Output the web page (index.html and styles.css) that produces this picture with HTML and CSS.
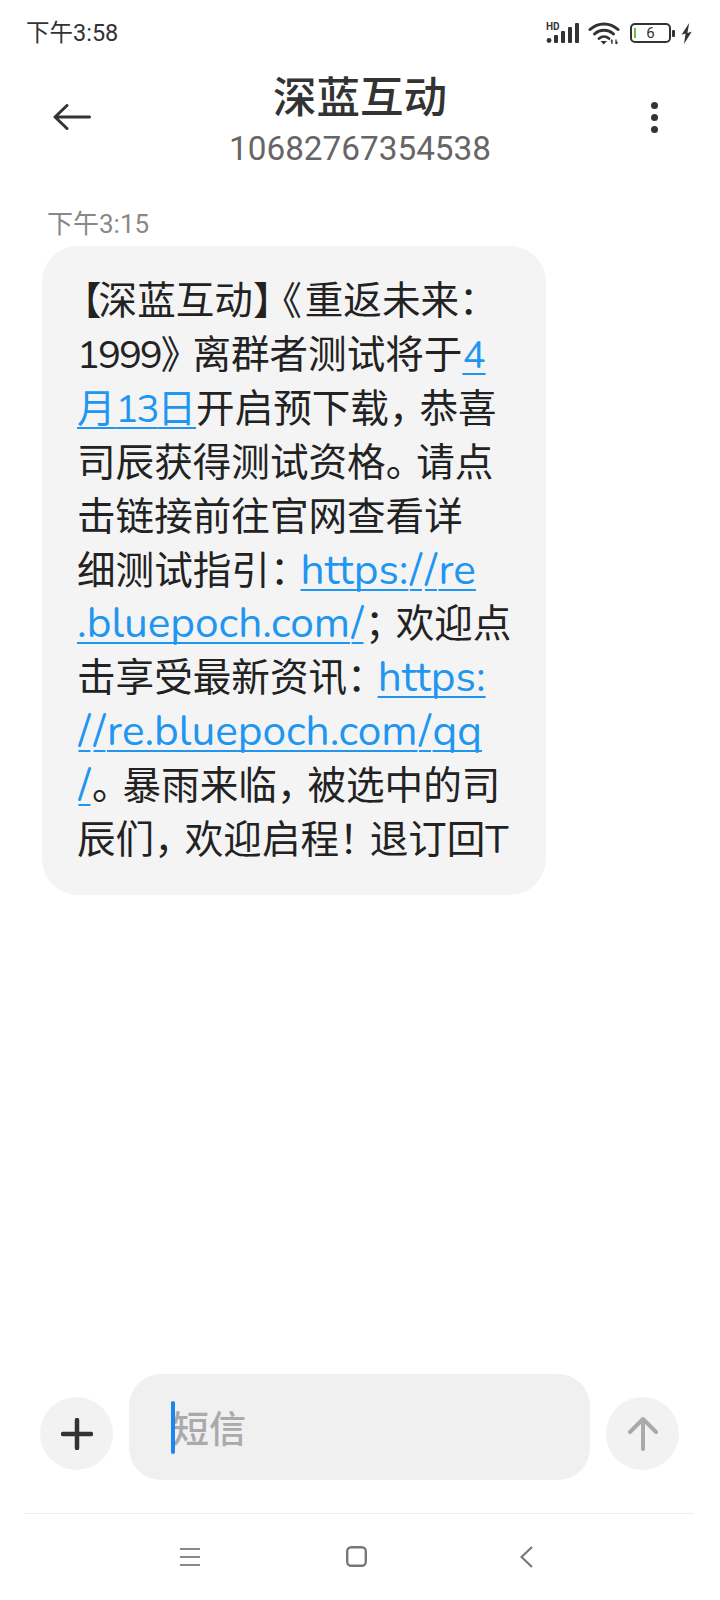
FILE: index.html
```html
<!DOCTYPE html>
<html lang="zh-CN">
<head>
<meta charset="utf-8">
<title>深蓝互动</title>
<link rel="stylesheet" href="styles.css">
</head>
<body>
<div class="phone">
  <div class="status">
    <span class="clock">下午3:58</span>
    <div class="status-icons">
      <svg class="ic-signal" width="34" height="22" viewBox="0 0 34 22">
        <text x="0" y="8" class="hd">HD</text>
        <circle cx="3" cy="18.500" r="2.400" fill="#333"/>
        <rect x="8" y="13" width="4" height="8" rx="1" fill="#333"/>
        <rect x="15" y="9" width="4" height="12" rx="1" fill="#333"/>
        <rect x="22" y="5" width="4" height="16" rx="1" fill="#333"/>
        <rect x="29" y="1" width="4" height="20" rx="1" fill="#333"/>
      </svg>
      <svg class="ic-wifi" width="32" height="24" viewBox="0 0 32 24">
        <path d="M2 8.500C10 1 22 1 30 8.500" fill="none" stroke="#333" stroke-width="3" stroke-linecap="round"/>
        <path d="M6.500 13C12 8 20 8 25.500 13" fill="none" stroke="#333" stroke-width="3" stroke-linecap="round"/>
        <path d="M11 17.500C14 15 18 15 21 17.500" fill="none" stroke="#333" stroke-width="2.800" stroke-linecap="round"/>
        <path d="M12.500 20H19L15.700 23.500Z" fill="#333"/>
        <path d="M24 23V19M23 20.500L24 18.500M28 18.500V23M28 23L29.500 21" fill="none" stroke="#333" stroke-width="1.300"/>
      </svg>
      <div class="battery">
        <div class="batt-body"><span class="batt-level"></span><span class="batt-num">6</span></div>
        <span class="batt-tip"></span>
      </div>
      <svg class="ic-bolt" width="11" height="21" viewBox="0 0 11 21">
        <path d="M8.200 0L0.500 11.800L4.600 10.600L3 21L10.700 8.800L6.400 10Z" fill="#333"/>
      </svg>
    </div>
  </div>

  <header class="topbar">
    <svg class="ic-back" width="38" height="26" viewBox="0 0 38 26">
      <path d="M2 13H36.500M14 1.500L2 13L14 24.500" fill="none" stroke="#333" stroke-width="3" stroke-linecap="round" stroke-linejoin="round"/>
    </svg>
    <div class="contact">
      <div class="contact-name">深蓝互动</div>
      <div class="contact-num">10682767354538</div>
    </div>
    <div class="kebab"><i></i><i></i><i></i></div>
  </header>

  <main class="thread">
    <div class="stamp">下午3:15</div>
    <div class="bubble"><span class="bl">【</span>深蓝互动<span class="br">】</span><span class="bo">《</span>重返未来：<br><span class="dg">1999</span><span class="br2">》</span>离群者测试将于<a href="#">4<br>月<span class="dg">13</span>日</a>开启预下载<span class="p">，</span>恭喜<br>司辰获得测试资格<span class="p">。</span>请点<br>击链接前往官网查看详<br>细测试指引<span class="p">：</span><a href="#" class="url">https:<span class="sl">/</span><span class="sl">/</span>re<br>.bluepoch.com<span class="sl">/</span></a><span class="p">；</span>欢迎点<br>击享受最新资讯<span class="p">：</span><a href="#" class="url">https:<br><span class="sl">/</span><span class="sl">/</span>re.bluepoch.com<span class="sl">/</span>qq<br><span class="sl">/</span></a><span class="p">。</span>暴雨来临<span class="p">，</span>被选中的司<br>辰们<span class="p">，</span>欢迎启程<span class="p">！</span>退订回T</div>
  </main>

  <div class="composer">
    <div class="round">
      <svg width="32" height="32" viewBox="0 0 32 32"><path d="M16 2V30M2 16H30" stroke="#333" stroke-width="4.500" stroke-linecap="round"/></svg>
    </div>
    <div class="input"><span class="caret"></span><span class="placeholder">短信</span></div>
    <div class="round">
      <svg width="30" height="35" viewBox="0 0 30 35"><path d="M15 33V3M2 16L15 3L28 16" fill="none" stroke="#aaa" stroke-width="4" stroke-linecap="round" stroke-linejoin="round"/></svg>
    </div>
  </div>

  <nav class="navbar">
    <svg width="20" height="18" viewBox="0 0 20 18"><path d="M0 1H20M0 9H20M0 17H20" stroke="#888" stroke-width="2"/></svg>
    <svg width="21" height="21" viewBox="0 0 21 21"><rect x="1.200" y="1.200" width="18.600" height="18.600" rx="4" fill="none" stroke="#777" stroke-width="2.400"/></svg>
    <svg class="ic-tri" width="13" height="22" viewBox="0 0 13 22"><path d="M12 1L1.500 11L12 21" fill="none" stroke="#777" stroke-width="2.200"/></svg>
  </nav>
</div>
</body>
</html>
```

FILE: styles.css
```css
html, body { margin: 0; padding: 0; background: #fff; }
.phone {
  width: 720px;
  height: 1600px;
  display: flex;
  flex-direction: column;
  font-family: "Nunito", "Lato", "Noto Sans CJK SC", sans-serif;
  overflow: hidden;
}
.status {
  height: 66px;
  margin-bottom: -6px;
  display: flex;
  align-items: center;
  justify-content: space-between;
  padding: 0 28px 0 26px;
  box-sizing: border-box;
}
.clock {
  font: 23.500px/1 "Roboto", "Noto Sans CJK SC", sans-serif;
  color: #333;
  padding-top: 2px;
}
.status-icons { display: flex; align-items: center; }
.hd { font: 700 10px "Roboto", sans-serif; fill: #333; }
.ic-wifi { margin-left: 8px; }
.battery { display: flex; align-items: center; margin-left: 10px; }
.batt-body {
  position: relative;
  width: 37px;
  height: 16px;
  border: 2px solid #333;
  border-radius: 5px;
  display: flex;
  align-items: center;
  justify-content: center;
}
.batt-level {
  position: absolute;
  left: 2px;
  top: 3px;
  width: 2px;
  height: 10px;
  background: #6cc04a;
}
.batt-num { font: 15px/1 "Roboto", sans-serif; color: #333; }
.batt-tip {
  width: 3px;
  height: 7px;
  margin-left: 1px;
  background: #333;
  border-radius: 1px;
}
.ic-bolt { margin-left: 6px; }
.topbar {
  height: 114px;
  display: grid;
  grid-template-columns: 1fr auto 1fr;
  align-items: center;
  padding: 0 62px;
  box-sizing: border-box;
}
.ic-back { margin-left: -9px; }
.contact { text-align: center; align-self: start; padding-top: 10px; }
.contact-name {
  font: 500 43.500px/50px "Noto Sans CJK SC", sans-serif;
  color: #333;
  margin-bottom: 9px;
}
.contact-num {
  font: 33.300px/40px "Roboto", sans-serif;
  color: #666;
}
.kebab {
  justify-self: end;
  display: flex;
  flex-direction: column;
  gap: 5px;
}
.kebab i {
  display: block;
  width: 7px;
  height: 7px;
  border-radius: 50%;
  background: #333;
}
.thread {
  flex: 1;
  padding: 34px 0 0 42px;
}
.stamp {
  font: 26px/32px "Roboto", "Noto Sans CJK SC", sans-serif;
  color: #888;
  margin: 0 0 6px 5px;
}
.bubble {
  width: 504px;
  height: 649px;
  box-sizing: border-box;
  padding: 29px 0 0 35px;
  background: #f4f4f5;
  border-radius: 36px;
  font-size: 38.600px;
  line-height: 53.900px;
  color: #222;
  white-space: nowrap;
}
.bl { margin-left: -14px; margin-right: -3px; }
.br { letter-spacing: -9px; }
.bo { letter-spacing: 3px; }
.br2 { letter-spacing: -7px; }
.dg { letter-spacing: -2.200px; }
.p { letter-spacing: -8px; }
.bubble a {
  color: #2196f0;
  text-decoration: underline;
  text-decoration-thickness: 2px;
  text-underline-offset: 5px;
  text-decoration-skip-ink: none;
}
.bubble .url { font-size: 42.400px; line-height: 0; }
.sl { padding: 0 1.500px; }
.composer {
  display: flex;
  align-items: flex-start;
  padding: 0 41px 0 40px;
  gap: 16px;
  height: 106px;
}
.round {
  width: 73px;
  height: 73px;
  flex: none;
  margin-top: 23px;
  border-radius: 50%;
  background: #f2f2f2;
  display: flex;
  align-items: center;
  justify-content: center;
}
.input {
  flex: 1;
  height: 106px;
  border-radius: 32px;
  background: #f0f0f0;
  display: flex;
  align-items: center;
  padding-left: 42px;
}
.caret {
  width: 4px;
  height: 53px;
  margin-right: -3px;
  border-radius: 2px;
  background: #1a86f0;
  position: relative;
}
.placeholder {
  font: 500 37px/1 "Noto Sans CJK SC", sans-serif;
  color: #aaa;
}
.navbar {
  margin: 33px 26px 0 24px;
  height: 87px;
  padding-bottom: 1px;
  box-sizing: border-box;
  border-top: 1px solid #eeeeee;
  display: flex;
  align-items: center;
  justify-content: center;
  gap: 146px;
  padding-right: 5px;
}
.ic-tri { margin-left: 7px; }
```
